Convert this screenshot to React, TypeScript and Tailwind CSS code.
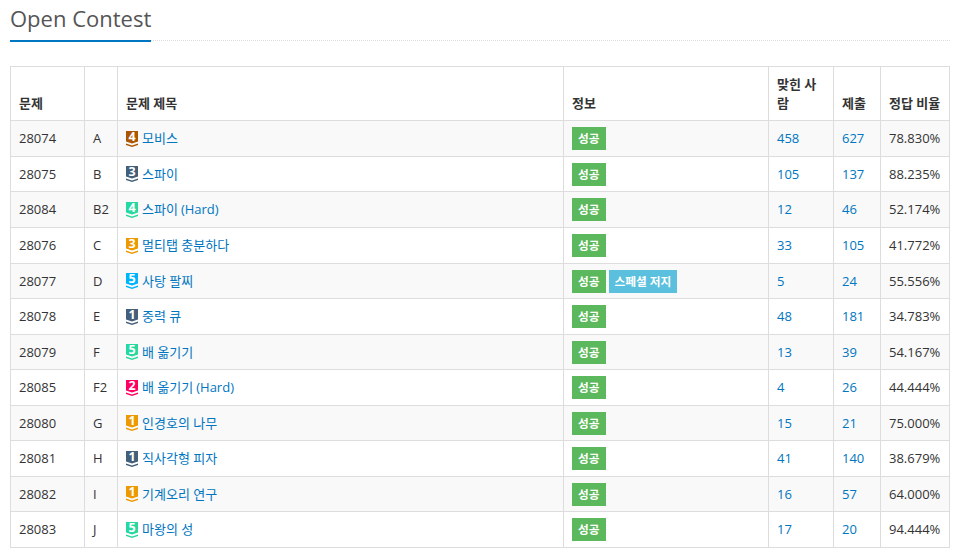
const rows = [
  { id: "28074", no: "A", tier: "#ad5600", lv: "4", title: "모비스", ac: "458", sub: "627", rate: "78.830%", h: "h-[36px]" },
  { id: "28075", no: "B", tier: "#435f7a", lv: "3", title: "스파이", ac: "105", sub: "137", rate: "88.235%", h: "h-[35px]" },
  { id: "28084", no: "B2", tier: "#27d8a0", lv: "4", title: "스파이", extra: "(Hard)", ac: "12", sub: "46", rate: "52.174%", h: "h-[36px]" },
  { id: "28076", no: "C", tier: "#ec9a00", lv: "3", title: "멀티탭 충분하다", ac: "33", sub: "105", rate: "41.772%", h: "h-[36px]" },
  { id: "28077", no: "D", tier: "#00b4fc", lv: "5", title: "사탕 팔찌", special: true, ac: "5", sub: "24", rate: "55.556%", h: "h-[35px]" },
  { id: "28078", no: "E", tier: "#435f7a", lv: "1", title: "중력 큐", ac: "48", sub: "181", rate: "34.783%", h: "h-[36px]" },
  { id: "28079", no: "F", tier: "#27d8a0", lv: "5", title: "배 옮기기", ac: "13", sub: "39", rate: "54.167%", h: "h-[35px]" },
  { id: "28085", no: "F2", tier: "#ff0062", lv: "2", title: "배 옮기기", extra: "(Hard)", ac: "4", sub: "26", rate: "44.444%", h: "h-[36px]" },
  { id: "28080", no: "G", tier: "#ec9a00", lv: "1", title: "인경호의 나무", ac: "15", sub: "21", rate: "75.000%", h: "h-[35px]" },
  { id: "28081", no: "H", tier: "#435f7a", lv: "1", title: "직사각형 피자", ac: "41", sub: "140", rate: "38.679%", h: "h-[36px]" },
  { id: "28082", no: "I", tier: "#ec9a00", lv: "1", title: "기계오리 연구", ac: "16", sub: "57", rate: "64.000%", h: "h-[35px]" },
  { id: "28083", no: "J", tier: "#27d8a0", lv: "5", title: "마왕의 성", ac: "17", sub: "20", rate: "94.444%", h: "h-[36px]" },
];

function TierBadge({ color, level }: { color: string; level: string }) {
  return (
    <span className="relative mr-[4px] block h-[16px] w-[12px] shrink-0">
      <svg width="12" height="16" viewBox="0 0 12 16" className="block">
        <path d="M0 0H12V10.5L6 12.5L0 10.5Z" fill={color} />
        <path d="M0 12.5L6 14.5L12 12.5V14L6 16L0 14Z" fill={color} />
      </svg>
      <span className="absolute left-0 top-[-3px] w-[12px] text-center text-[12.5px] font-bold leading-[18px] text-white">
        {level}
      </span>
    </span>
  );
}

const th = "border border-[#ddd] p-[8px] align-bottom text-left font-bold leading-[18.5px]";
const td = "border border-[#ddd] px-[8px] py-0 align-middle leading-[18.5px]";
const label = "inline-block h-[23px] px-[6px] text-[11.7px] font-bold leading-[23px] text-white";

export default function App() {
  return (
    <div className="w-[958px] bg-white pl-[10px] pr-[8px] text-[13px] text-[#333] [font-family:'Open_Sans','Noto_Sans_CJK_KR',sans-serif]">
      <div className="h-[41px] border-b border-dotted border-[#ddd]">
        <h1 className="inline-block h-[42px] border-b-[2px] border-[#0076c0] pt-[1px] text-[22px] font-normal leading-[34px] text-[#555]">
          Open Contest
        </h1>
      </div>
      <table className="mt-[25px] w-[939px] table-fixed border-collapse">
        <colgroup>
          <col className="w-[74px]" />
          <col className="w-[33px]" />
          <col className="w-[446px]" />
          <col className="w-[205px]" />
          <col className="w-[65px]" />
          <col className="w-[47px]" />
          <col className="w-[69px]" />
        </colgroup>
        <thead>
          <tr>
            <th className={th}>문제</th>
            <th className={th}></th>
            <th className={th}>문제 제목</th>
            <th className={th}>정보</th>
            <th className={th}>맞힌 사람</th>
            <th className={th}>제출</th>
            <th className={th + " whitespace-nowrap"}>정답 비율</th>
          </tr>
        </thead>
        <tbody>
          {rows.map((r, i) => (
            <tr key={r.id} className={r.h + (i % 2 === 0 ? " bg-[#f9f9f9]" : "")}>
              <td className={td}>{r.id}</td>
              <td className={td}>{r.no}</td>
              <td className={td}>
                <div className="flex items-center">
                  <TierBadge color={r.tier} level={r.lv} />
                  <a className="text-[#0076c0]">{r.title}</a>
                  {r.extra && <span className="ml-[3px] text-[#0076c0]">{r.extra}</span>}
                </div>
              </td>
              <td className={td}>
                <div className="flex gap-[3px]">
                  <span className={label + " bg-[#5cb85c]"}>성공</span>
                  {r.special && <span className={label + " bg-[#5bc0de]"}>스페셜 저지</span>}
                </div>
              </td>
              <td className={td}><a className="text-[#0076c0]">{r.ac}</a></td>
              <td className={td}><a className="text-[#0076c0]">{r.sub}</a></td>
              <td className={td}>{r.rate}</td>
            </tr>
          ))}
        </tbody>
      </table>
    </div>
  );
}
